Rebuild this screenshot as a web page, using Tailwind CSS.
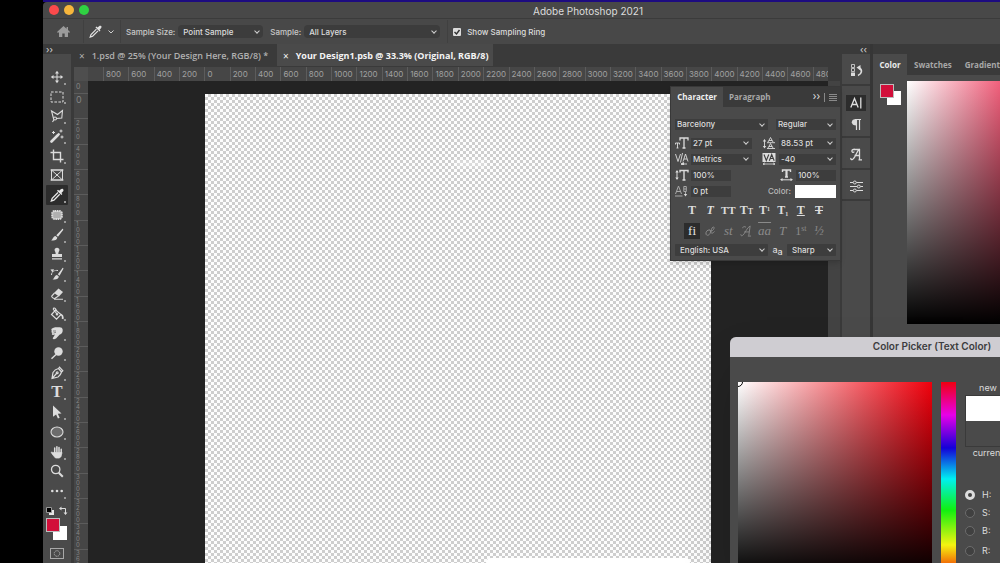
<!DOCTYPE html>
<html lang="en">
<head>
    <meta charset="UTF-8">
    <meta name="viewport" content="width=device-width, initial-scale=1.0">
    <title>Adobe Photoshop 2021</title>
    <script src="https://cdn.jsdelivr.net/npm/@tailwindcss/browser@4"></script>
    <style>
        body {
            font-family: Inter, 'Liberation Sans', sans-serif;
        }
        .clean {
            font-family: 'Open Sans', 'Noto Sans', sans-serif;
        }
        .serif {
            font-family: 'Liberation Serif', serif;
        }
        .checker {
            background: repeating-conic-gradient(#cecece 0 25%, #fdfdfd 0 50%) 0 0 / 6px 6px;
        }
        .ramp {
            background: linear-gradient(to bottom, transparent, #000), linear-gradient(to right, #fff, #f2607c);
        }
        .field {
            background: linear-gradient(to bottom, transparent, #000), linear-gradient(to right, #fff, #f0000c);
        }
        .hue {
            background: linear-gradient(to bottom, #f00010, #e800e8 17%, #1400d8 34%, #00f0f0 50%, #10f010 66%, #f4f410 84%, #f01000);
        }
        /* dropdown chevron */
        .drop::after {
            content: '';
            position: absolute;
            right: 4px;
            top: 50%;
            width: 4px;
            height: 4px;
            margin-top: -3px;
            border-right: 1px solid #d0d0d0;
            border-bottom: 1px solid #d0d0d0;
            transform: rotate(45deg);
            pointer-events: none;
        }
        /* flyout marker on grouped tools */
        .more::after {
            content: '';
            position: absolute;
            right: 2px;
            bottom: 2px;
            width: 2px;
            height: 2px;
            background: #999;
        }
    </style>
</head>
<body class="bg-black h-screen overflow-hidden flex flex-col pl-[43px] text-[#dcdcdc] text-[9px] leading-3 relative">
    <div class="h-[2px] bg-[#1d0b80] shrink-0"></div>

    <!-- Title bar -->
    <header class="h-[17px] shrink-0 flex items-center bg-[#484848] border-b border-[#3b3b3b] rounded-tl-sm">
        <div class="flex gap-[5px] pl-[6px]">
            <button aria-label="Close" class="size-[10px] rounded-full bg-[#fb4a4c]"></button>
            <button aria-label="Minimize" class="size-[10px] rounded-full bg-[#f7b63c]"></button>
            <button aria-label="Zoom" class="size-[10px] rounded-full bg-[#2fd142]"></button>
        </div>
        <h1 class="flex-1 text-center pl-[87px] pt-px text-[10px]">Adobe Photoshop 2021</h1>
    </header>

    <!-- Options bar -->
    <div class="h-[25px] shrink-0 flex items-center bg-[#484848] text-[8px] font-medium whitespace-nowrap">
        <button aria-label="Home" class="ml-[14px]">
            <svg class="size-[13px]" viewBox="0 0 13 13" fill="#9b9b9b"><path d="M6.500 1 0 7l1 1 1-.9V12h3.300V8.400h2.400V12H11V7.100l1 .9 1-1-2-1.900V2H9.600v1.700z"/></svg>
        </button>
        <span class="w-px h-[23px] bg-[#404040] ml-[13px]"></span>
        <button aria-label="Eyedropper presets" class="ml-[5px] flex items-center gap-[6px]">
            <svg class="size-[13px]" viewBox="0 0 14 14"><path d="M8 4.500 2.200 10.300 1.300 13l2.600-.9L9.700 6.300" fill="none" stroke="#e2e2e2" stroke-width="1.300"/><path d="m7 2.700 4.400 4.400 1-1-1-1.100 1.500-1.500c.8-.8.8-1.700.2-2.300s-1.600-.6-2.300.1L9.200 2.800 8 1.700z" fill="#e2e2e2"/></svg>
            <svg class="w-[6px] h-[4px]" viewBox="0 0 6 4" fill="none" stroke="#d0d0d0"><path d="m.5.5 2.500 2.500L5.500.5"/></svg>
        </button>
        <span class="w-px h-[23px] bg-[#404040] ml-[6px]"></span>
        <label for="size" class="ml-[5px] text-[#c8c8c8]">Sample Size:</label>
        <div class="drop relative ml-[3px]">
            <select id="size" class="appearance-none block w-[85px] h-[13px] pl-[5px] bg-[#3c3c3c] rounded-sm"><option>Point Sample</option></select>
        </div>
        <label for="sample" class="ml-[7px] text-[#c8c8c8]">Sample:</label>
        <div class="drop relative ml-[3px]">
            <select id="sample" class="appearance-none block w-[136px] h-[13px] pl-[5px] bg-[#3c3c3c] rounded-sm"><option>All Layers</option></select>
        </div>
        <span class="w-px h-[23px] bg-[#404040] ml-[7px]"></span>
        <label class="flex items-center gap-[6px] ml-[5px]">
            <span class="relative size-[8px]">
                <input type="checkbox" checked class="appearance-none block size-[8px] rounded-[1px] bg-[#dcdcdc]">
                <svg class="absolute inset-0 size-[8px] pointer-events-none" viewBox="0 0 8 8" fill="none" stroke="#303030" stroke-width="1.400"><path d="m1.500 4 2 2 3-4"/></svg>
            </span>
            Show Sampling Ring
        </label>
    </div>

    <main class="flex-1 min-h-0 flex bg-[#3a3a3a]">
        <!-- Toolbar -->
        <aside class="w-[29px] shrink-0 flex flex-col border-r border-[#3a3a3a]">
            <button class="h-[10px] pl-[3px] text-left leading-[7px] text-[9px]" aria-label="Expand tools">››</button>
            <div class="flex-1 bg-[#4a4a4a] pt-[13px]">
                <div class="grid grid-rows-[repeat(22,minmax(0,1fr))] h-[434px] px-[3px] [&>button]:relative [&>button]:flex [&>button]:items-center [&>button]:justify-center [&_svg]:size-[14px]">
                    <button class="more" aria-label="Move"><svg viewBox="0 0 14 14" fill="#dcdcdc"><path d="M6.500 3h1v3.500H11v1H7.500V11h-1V7.500H3v-1h3.500z"/><path d="m7 .8 2 2.700H5zM7 13.200l2-2.700H5zM.8 7l2.700-2v4zM13.200 7l-2.700-2v4z"/></svg></button>
                    <button class="more" aria-label="Marquee"><svg viewBox="0 0 14 14" fill="none" stroke="#dcdcdc"><rect x="1" y="2" width="12" height="10" stroke-dasharray="2.600 1.400"/></svg></button>
                    <button class="more" aria-label="Polygonal lasso"><svg viewBox="0 0 14 14" fill="none" stroke="#dcdcdc" stroke-width="1.100"><path d="M3.500 9.500 1.500 2l6 3.500L12.500 1.500l-.7 7.500-5.300.5"/><circle cx="5" cy="9.500" r="1.500"/><path d="M4 10.500 2.500 13"/></svg></button>
                    <button class="more" aria-label="Magic wand"><svg viewBox="0 0 14 14" stroke="#dcdcdc" fill="none"><path d="M1.500 12.500 8 6" stroke-width="2.600" stroke-linecap="round"/><path d="m8.500 5.500 1-1" stroke-width="2"/><path d="M3.500 2v3M2 3.500h3M11 .5v3M9.500 2h3M12 6.500v3M10.500 8h3"/></svg></button>
                    <button class="more" aria-label="Crop"><svg viewBox="0 0 14 14" fill="none" stroke="#dcdcdc" stroke-width="1.400"><path d="M3.500.5v10h10M.5 3.500h10v10"/></svg></button>
                    <button aria-label="Frame"><svg viewBox="0 0 14 14" fill="none" stroke="#dcdcdc"><rect x="1.500" y="2" width="11" height="10"/><path d="m1.500 2 11 10M12.500 2l-11 10M.5 2h13M.5 12h13"/></svg></button>
                    <button class="more bg-[#2c2c2c] rounded-[1px]" aria-label="Eyedropper"><svg viewBox="0 0 14 14"><path d="M8 4.500 2.200 10.300 1.300 13l2.600-.9L9.700 6.300" fill="none" stroke="#e8e8e8" stroke-width="1.300"/><path d="m7 2.700 4.400 4.400 1-1-1-1.100 1.500-1.500c.8-.8.8-1.700.2-2.300s-1.600-.6-2.300.1L9.200 2.800 8 1.700z" fill="#e8e8e8"/></svg></button>
                    <button class="more" aria-label="Patch"><svg viewBox="0 0 14 14"><rect x="2.200" y="3" width="9.600" height="8" rx="2.500" fill="#b0b0b0" stroke="#dcdcdc" stroke-width="2" stroke-dasharray="1.600 .6"/></svg></button>
                    <button class="more" aria-label="Brush"><svg viewBox="0 0 14 14" fill="#dcdcdc"><path d="M13 1c.5.500.2 1-.2 1.600L8 8.800 6.300 7.300 11.600 1.700C12 1.200 12.500.6 13 1zM5.500 8l1.800 1.600C7.200 12 4.500 13 1 12.300c2-.6 1.800-3.800 4.500-4.300z"/></svg></button>
                    <button class="more" aria-label="Clone stamp"><svg viewBox="0 0 14 14" fill="#dcdcdc"><path d="M7 .8c1.700 0 2.600 1.200 2.400 2.500C9.200 4.400 8.300 5 8.300 7H12v3H2V7h3.700c0-2-.9-2.600-1.100-3.700C4.400 2 5.300.8 7 .8zM2 11.200h10v1.300H2z"/></svg></button>
                    <button class="more" aria-label="History brush"><svg viewBox="0 0 14 14" fill="#dcdcdc"><path d="M13.200 1c.5.500.1 1.100-.2 1.600L9.500 8.800 7.800 7.300 12 1.700c.3-.5.800-1.100 1.200-.7zM7 8l1.800 1.600C8.700 12 6 13 2.500 12.300 4.500 11.700 4.300 8.500 7 8z"/><path d="M1.500 8c0-3.500 3-5 6.500-4.500" fill="none" stroke="#dcdcdc" stroke-dasharray="2.500 .8"/><path d="M.5 2.500 4 2.200 2.500 5.500z"/></svg></button>
                    <button class="more" aria-label="Eraser"><svg viewBox="0 0 14 14"><path d="m8.500 1.500 4.500 3.500-4 4.500-5-3.500z" fill="#dcdcdc"/><path d="m4.500 6-2.800 3c-.5.800 1.800 2.800 3 2.500L8.500 9M4 12.200h9" fill="none" stroke="#dcdcdc" stroke-width="1.100"/></svg></button>
                    <button class="more" aria-label="Paint bucket"><svg viewBox="0 0 14 14" fill="none" stroke="#dcdcdc" stroke-width="1.200"><path d="m5.500 3 5.500 4.500-4.500 4.700-5-4.700zM7 7 3.500 2.500c-.5-1.300 1-2 1.800-1L7.500 5"/><circle cx="7" cy="7.200" r=".7"/><path d="M11 7.500c1.500.6 2 2.500 1.600 4.500" stroke-width="1.800"/></svg></button>
                    <button class="more" aria-label="Smudge"><svg viewBox="0 0 14 14" fill="#dcdcdc"><path d="M2 2.500C4 1 6.500 1.500 8 1.300c2.500-.5 4.500 0 4.700 2.500.2 2.500-1 4.500-3.200 5L6.500 12c-1 1.500-3.500 1.500-3.800.2L5 8.500 3 9C1.500 9 1.500 7.500 2.500 7 1 6.500 1.200 5.200 2 5c-.9-.5-.9-1.800 0-2.500z"/><path d="M3 5h3M3.500 7 6 6.300" stroke="#4a4a4a" stroke-width=".6"/></svg></button>
                    <button class="more" aria-label="Dodge"><svg viewBox="0 0 14 14"><circle cx="8.500" cy="5.500" r="4.200" fill="#dcdcdc"/><path d="m6 8.500-4.500 4.300" stroke="#dcdcdc" stroke-width="1.500"/></svg></button>
                    <button class="more" aria-label="Pen"><svg viewBox="0 0 14 14" fill="none" stroke="#dcdcdc" stroke-width="1.200"><path d="M2 12.500 3 6.500C4.500 4 6.500 3 8.500 2.500l3 3.500c-.5 2-1.500 3.800-3.500 5zM2 12.500 6.500 7.500M8.500 2.500l1-1.300 3.300 3.600-1.300 1.200"/><circle cx="7.200" cy="6.800" r=".9"/></svg></button>
                    <button class="more serif text-[17px] leading-4 font-bold" aria-label="Type">T</button>
                    <button class="more" aria-label="Path selection"><svg viewBox="0 0 14 14" fill="#dcdcdc"><path d="M3 .5 11.500 8.500 7.800 8.800 9.700 12.800 7.900 13.500 6.100 9.500 3 11.800z"/></svg></button>
                    <button class="more" aria-label="Ellipse"><svg viewBox="0 0 14 14"><ellipse cx="7" cy="7" rx="6" ry="5" fill="#6c6c6c" stroke="#dcdcdc" stroke-width="1.100"/></svg></button>
                    <button class="more" aria-label="Hand"><svg viewBox="0 0 14 14" fill="none" stroke="#dcdcdc" stroke-linecap="round"><path d="M4.700 8V3M6.900 7V1.800M9 7V2.500M11.200 8V4.300" stroke-width="1.500"/><path d="M4 7.500h8L11 11.500 9.500 13h-4L2.500 9.500 1.300 7.500z" fill="#dcdcdc" stroke-width=".8"/></svg></button>
                    <button aria-label="Zoom tool"><svg viewBox="0 0 14 14" fill="none" stroke="#dcdcdc"><circle cx="5.700" cy="5.500" r="4.200" stroke-width="1.300"/><path d="m8.800 8.800 4 4" stroke-width="2"/></svg></button>
                    <button class="more" aria-label="Edit toolbar"><svg viewBox="0 0 14 14" fill="#dcdcdc"><circle cx="2.300" cy="7" r="1.300"/><circle cx="7" cy="7" r="1.300"/><circle cx="11.700" cy="7" r="1.300"/></svg></button>
                </div>
                <div class="flex gap-[5px] pl-[3px] pt-[5px]">
                    <button aria-label="Default colors"><svg class="size-[8px]" viewBox="0 0 8 8"><path d="M3 3h5v5H3z" fill="#e6e6e6"/><path d="M.5.5h5v5h-5z" fill="#000" stroke="#999"/></svg></button>
                    <button aria-label="Switch colors"><svg class="size-[9px]" viewBox="0 0 9 9" fill="none" stroke="#dcdcdc"><path d="M2 2.500h4.500V7"/><path d="M0 2.500 2.500.5v4zM6.500 9l-2-2.500h4z" fill="#dcdcdc" stroke="none"/></svg></button>
                </div>
                <div class="relative w-[21px] h-[22px] ml-[3px] mt-[3px]">
                    <button aria-label="Background color" class="absolute right-0 bottom-0 size-[14px] bg-white"></button>
                    <button aria-label="Foreground color" class="absolute left-0 top-0 size-[14px] bg-[#d20f3a] border border-[#bdbdbd]"></button>
                </div>
                <button aria-label="Quick mask" class="block ml-[7px] mt-[8px]"><svg class="w-[14px] h-[11px]" viewBox="0 0 14 11" fill="none" stroke="#a8a8a8"><rect x=".5" y=".5" width="13" height="10"/><circle cx="7" cy="5.500" r="2.800" stroke-dasharray="1.500 .7"/></svg></button>
            </div>
        </aside>

        <!-- Document area -->
        <section class="flex-1 min-w-0 flex flex-col pl-[2px] pr-[2px]">
            <nav class="clean h-[22px] shrink-0 flex text-[9px] font-semibold whitespace-nowrap text-[#b0b0b0]">
                <button class="flex items-center gap-[7px] pt-px pl-[5px] w-[203px]"><span class="font-normal text-[10px]">×</span>1.psd @ 25% (Your Design Here, RGB/8) *</button>
                <button class="flex items-center gap-[7px] pt-px pl-[6px] w-[216px] bg-[#4a4a4a] text-[#f4f4f4] font-bold"><span class="font-normal text-[10px]">×</span>Your Design1.psb @ 33.3% (Original, RGB/8)</button>
            </nav>
            <div class="h-[15px] shrink-0 flex bg-[#464646] border-t border-[#3a3a3a] mr-[12px]">
                <span class="w-[14px] shrink-0 bg-[#4e4e4e]"></span>
                <div class="flex-1 min-w-0 ml-[15px] overflow-hidden">
                    <div id="ruler-x" class="w-[735px] grid grid-cols-[repeat(29,minmax(0,1fr))] text-[8px] leading-[15px] text-[#a0a0a0]"></div>
                </div>
            </div>
            <div class="flex-1 min-h-0 flex">
                <div class="w-[14px] shrink-0 bg-[#464646] overflow-hidden text-[#848484]">
                    <div class="h-[12px] pl-[2px] text-[7px] leading-[11px]">0</div>
                    <div id="ruler-y" class="grid grid-rows-[repeat(19,minmax(0,1fr))] h-[481px] text-[6px] leading-[7px]"></div>
                </div>
                <div class="flex-1 min-w-0 bg-[#232323] flex justify-start pl-[117px] pt-[13px] overflow-hidden">
                    <div class="checker w-[506px] h-full relative">
                        <div class="absolute left-[250px] top-[66px] w-[32px] h-[7px] bg-white/30 blur-[2px]"></div>
                        <div class="absolute left-[281px] bottom-0 w-[204px] h-[5px] bg-white rounded-t-md"></div>
                    </div>
                </div>
                <div class="w-[12px] shrink-0 bg-[#434343]"></div>
            </div>
        </section>

        <!-- Collapsed panels -->
        <aside class="w-[31px] shrink-0 flex flex-col border-r-3 border-[#363636]">
            <button class="h-[10px] text-right pr-[3px] leading-[7px] text-[9px]" aria-label="Collapse panels">‹‹</button>
            <div class="flex-1 flex flex-col gap-[2px] [&>div]:bg-[#4a4a4a] [&>div]:flex [&>div]:flex-col [&>div]:items-center [&>div]:justify-center [&>div]:pt-[3px]">
                <div class="h-[30px]">
                    <button aria-label="History"><svg class="size-[13px]" viewBox="0 0 13 13" fill="none" stroke="#dcdcdc"><path d="M1.500.5h3v3h-3zM1.500 4.500h3v3h-3z" stroke-width=".8"/><path d="M1 8.500h4V12H1z" fill="#dcdcdc" stroke="none"/><path d="M8 11.500c4-1.500 4.500-5.500 1.500-7.500" stroke-width="1.600"/><path d="M6.500 3.500 10.500 1v5.500z" fill="#dcdcdc" stroke="none"/></svg></button>
                </div>
                <div class="h-[50px] gap-[7px]">
                    <button aria-label="Character" class="bg-[#2c2c2c] w-[20px] h-[16px] flex justify-center"><svg class="w-[12px] h-[16px]" viewBox="0 0 12 16" fill="none" stroke="#e0e0e0" stroke-width="1.300"><path d="M.8 12.500 4.500 3.500l3.700 9M2.300 9.500h4.400M10.800 2.500v11"/></svg></button>
                    <button aria-label="Paragraph"><svg class="w-[10px] h-[13px]" viewBox="0 0 10 13"><path d="M5.500 1v11M8.500 1v11M4 1.500h6" stroke="#dcdcdc" stroke-width="1.200"/><path d="M5.500 1v6.500C2.500 7.500.8 6.200.8 4.200S2.500 1 5.500 1z" fill="#dcdcdc"/></svg></button>
                </div>
                <div class="h-[30px]">
                    <button aria-label="Glyphs"><svg class="w-[13px] h-[13px]" viewBox="0 0 13 13" fill="none" stroke="#dcdcdc"><path d="M9.500 1v10.500M9.500 1C6.500 3 5.500 10 2.500 11.500c-1.200.5-2-.5-1.500-1.500M4.500 7.500h5M5.500 1.500C3.500.8 1.500 2 2 3.500s2 1 2 0M4 1.500h6M8.500 11.800H12" stroke-width="1.300"/></svg></button>
                </div>
                <div class="h-[29px]">
                    <button aria-label="Properties"><svg class="w-[13px] h-[13px]" viewBox="0 0 13 13" fill="none" stroke="#dcdcdc"><path d="M0 2.500h3M6.500 2.500H13M0 6.500h7M10.500 6.500H13M0 10.500h3M6.500 10.500H13"/><circle cx="4.800" cy="2.500" r="1.500"/><circle cx="8.800" cy="6.500" r="1.500"/><circle cx="4.800" cy="10.500" r="1.500"/></svg></button>
                </div>
                <div class="flex-1"></div>
            </div>
        </aside>

        <!-- Color panel -->
        <aside class="w-[127px] shrink-0 flex flex-col pt-[10px] overflow-hidden">
            <nav class="clean h-[21px] shrink-0 flex font-bold text-[8px] text-[#a8a8a8] whitespace-nowrap">
                <button class="w-[34px] shrink-0 bg-[#4a4a4a] text-[#ececec]">Color</button>
                <button class="px-[7px]">Swatches</button>
                <button class="pl-[6px]">Gradients</button>
            </nav>
            <div class="flex-1 bg-[#4a4a4a] flex items-start pt-[6px]">
                <div class="relative w-[21px] h-[21px] ml-[7px] mr-[6px] mt-[3px] shrink-0">
                    <button aria-label="Panel background" class="absolute right-0 bottom-0 size-[14px] bg-white"></button>
                    <button aria-label="Panel foreground" class="absolute left-0 top-0 size-[14px] bg-[#d20f3a] border border-[#bdbdbd]"></button>
                </div>
                <div class="ramp flex-1 h-[243px]"></div>
            </div>
        </aside>
    </main>

    <!-- Character panel -->
    <section class="absolute left-[670px] top-[86px] w-[171px] bg-[#4a4a4a] border border-[#383838] shadow-md text-[8px] leading-[11px] font-medium">
        <nav class="clean h-[20px] flex items-stretch bg-[#3a3a3a] font-bold">
            <button class="w-[52px] pb-[2px] bg-[#4a4a4a] text-[#f0f0f0]">Character</button>
            <button class="pl-[6px] pb-[2px] text-[#a8a8a8]">Paragraph</button>
            <button aria-label="Collapse" class="ml-auto text-[12px] font-normal pb-[4px]">››</button>
            <span class="w-px h-[9px] bg-[#888] self-center mx-[4px]"></span>
            <button aria-label="Panel menu" class="mr-[3px]"><svg class="w-[8px] h-[7px]" viewBox="0 0 8 7" stroke="#8a8a8a"><path d="M0 .5h8M0 2.500h8M0 4.500h8M0 6.500h8"/></svg></button>
        </nav>
        <form class="px-[4px] pt-[12px] pb-[4px] [&_select]:appearance-none [&_select]:block [&_select]:w-full [&_select]:h-[11px] [&_select]:bg-[#3d3d3d] [&_input]:bg-[#3d3d3d] [&_input]:h-[11px] [&_input]:pl-[2px]">
            <div class="flex justify-between">
                <div class="drop relative w-[93px]"><select aria-label="Font family" class="pl-[2px]"><option>Barcelony</option></select></div>
                <div class="drop relative w-[60px]"><select aria-label="Font style" class="pl-[2px]"><option>Regular</option></select></div>
            </div>
            <div class="grid grid-cols-[16px_61px_10px_17px_57px] auto-rows-[12px] gap-y-1 mt-[7px] items-center">
                <svg class="w-[14px] h-[12px]" viewBox="0 0 14 12" fill="none" stroke="#dcdcdc"><path d="M5 3.500V1h8v2.500M9 1v10M7.500 11h3" stroke-width="1.300"/><path d="M.5 7.500V6h4v1.500M2.500 6v5M1.500 11h2" stroke-width=".9"/></svg>
                <div class="drop relative"><select aria-label="Font size" class="pl-[2px]"><option>27 pt</option></select></div>
                <span></span>
                <svg class="w-[14px] h-[12px]" viewBox="0 0 14 12" fill="none" stroke="#dcdcdc" stroke-width=".9"><path d="m6 5 2.500-4.500L11 5M7 3.500h3M6 11l2.500-4.500L11 11M7 9.500h3M5 5.700h8M5 11.500h8M2.500 3v7"/><path d="M.8 4.500 2.500 2l1.700 2.500zM.8 9l1.700 2.500L4.200 9z" fill="#dcdcdc" stroke="none"/></svg>
                <div class="drop relative"><select aria-label="Leading" class="pl-[2px]"><option>88.53 pt</option></select></div>

                <svg class="w-[14px] h-[12px]" viewBox="0 0 14 12" fill="none" stroke="#dcdcdc" stroke-width=".9"><path d="m.5 1 2.500 7.500L5.500 1M7.500 0 5.500 9.500M8 8.500 10.500 1 13 8.500M9 6h3M6.500 11H12"/><path d="m6 11 2.500-1.500v3z" fill="#dcdcdc"/></svg>
                <div class="drop relative"><select aria-label="Kerning" class="pl-[2px]"><option>Metrics</option></select></div>
                <span></span>
                <svg class="w-[14px] h-[12px]" viewBox="0 0 14 12" fill="none"><path d="M.5 0h13v9H.5z" fill="#dcdcdc"/><path d="m2 1.500 2.300 6 2.500-6M7.300 7.800 9.700 1.500l2.500 6.300M8.300 5.500h3" stroke="#3d3d3d" stroke-width="1.100"/><path d="M1 11h12M3 9.800 1 11l2 1.200M11 9.800l2 1.200-2 1.200" stroke="#dcdcdc" stroke-width=".8"/></svg>
                <div class="drop relative"><select aria-label="Tracking" class="pl-[2px]"><option>-40</option></select></div>

                <svg class="w-[14px] h-[12px]" viewBox="0 0 14 12" fill="none" stroke="#dcdcdc"><path d="M5 3.500V1.500h8v2M9 1.500V11M7.500 11h3" stroke-width="1.400"/><path d="M2 2v8"/><path d="M.3 3.500 2 1l1.700 2.500zM.3 8.500 2 11l1.700-2.500z" fill="#dcdcdc" stroke="none"/></svg>
                <input aria-label="Vertical scale" value="100%" class="w-[40px]">
                <div class="col-span-3 flex items-center justify-end gap-[3px]">
                    <svg class="w-[13px] h-[12px]" viewBox="0 0 13 12" fill="none" stroke="#dcdcdc"><path d="M2.500 3V1h8v2M5 8h3" stroke-width="1.400"/><path d="M6.500 1v7" stroke-width="2.200"/><path d="M1 10.800h11"/><path d="M2.500 9 0 10.800l2.500 1.200zM10.500 9l2.500 1.800-2.500 1.200z" fill="#dcdcdc" stroke="none"/></svg>
                    <input aria-label="Horizontal scale" value="100%" class="w-[40px]">
                </div>

                <svg class="w-[14px] h-[12px]" viewBox="0 0 14 12" fill="none" stroke="#a8a8a8"><path d="M.5 9 3.500 1l3 8M1.500 6.500h4M0 11h7.500"/><path d="M8.800 1.500h2.500v5H8.800zM8.800 4h2.500M10.500 7v3"/><path d="m8.800 9 1.700 2.500L12.200 9z" fill="#dcdcdc" stroke="none"/></svg>
                <input aria-label="Baseline shift" value="0 pt" class="w-[40px]">
                <div class="col-span-3 flex items-center justify-end gap-[4px]">
                    <span class="text-[#b8b8b8]">Color:</span>
                    <button type="button" aria-label="Text color" class="w-[41px] h-[13px] bg-white"></button>
                </div>
            </div>
            <div class="serif grid grid-cols-8 mt-[5px] px-[8px] text-[12px] leading-[16px] font-bold [&>button]:h-[16px] [&>button]:whitespace-nowrap">
                <button type="button" aria-label="Faux bold" class="font-black">T</button>
                <button type="button" aria-label="Faux italic" class="italic">T</button>
                <button type="button" aria-label="All caps" class="text-[11px]">TT</button>
                <button type="button" aria-label="Small caps">T<span class="text-[8px]">T</span></button>
                <button type="button" aria-label="Superscript">T<sup class="text-[6px]">1</sup></button>
                <button type="button" aria-label="Subscript">T<sub class="text-[6px]">1</sub></button>
                <button type="button" aria-label="Underline" class="underline">T</button>
                <button type="button" aria-label="Strikethrough" class="line-through">T</button>
            </div>
            <div class="serif grid grid-cols-8 mt-[5px] px-[8px] text-[13px] leading-[16px] font-normal text-[#8a8a8a] [&>button]:h-[16px] [&>button]:whitespace-nowrap">
                <button type="button" aria-label="Ligatures" class="bg-[#2c2c2c] text-[#e6e6e6] w-[16px] justify-self-center">fi</button>
                <button type="button" aria-label="Contextual alternates" class="flex justify-center items-center"><svg class="size-[12px]" viewBox="0 0 12 12" fill="none" stroke="#8a8a8a"><path d="M5.500 5C3.500 4.500 1.500 7 2 9s3 1.500 4-.5.500-3.500-.5-3.500c1 1.500 3 1 4-.5s.5-3-.5-2.500-2.500 4-2 5.500 2 .5 3.500-1"/></svg></button>
                <button type="button" aria-label="Discretionary ligatures" class="italic">st</button>
                <button type="button" aria-label="Swash" class="flex justify-center items-center"><svg class="size-[12px]" viewBox="0 0 13 13" fill="none" stroke="#8a8a8a"><path d="m11 1-1.500 10.500M11 1C7 3 5.500 10 2.500 11.500c-1.200.5-2-.5-1.500-1.500M4.500 7.500H10M6.500 2.500C5 1 2.500 2 3 3.500M8.500 12H12"/></svg></button>
                <button type="button" aria-label="Stylistic alternates" class="italic overline">aa</button>
                <button type="button" aria-label="Titling alternates" class="italic">T</button>
                <button type="button" aria-label="Ordinals" class="text-[12px]">1<sup class="text-[8px]">st</sup></button>
                <button type="button" aria-label="Fractions" class="italic">½</button>
            </div>
            <div class="flex items-center mt-[5px] [&_select]:h-[12px] [&_select]:rounded-[1px]">
                <div class="drop relative w-[93px]"><select aria-label="Language" class="pl-[5px]"><option>English: USA</option></select></div>
                <span class="w-[19px] text-center text-[9px] leading-[12px]">a<sub class="text-[9px]">a</sub></span>
                <div class="drop relative flex-1"><select aria-label="Anti-aliasing" class="pl-[5px]"><option>Sharp</option></select></div>
            </div>
        </form>
    </section>

    <!-- Color picker dialog -->
    <section role="dialog" aria-labelledby="picker-title" class="absolute left-[730px] right-0 top-[337px] bg-[#4a4a4a] rounded-tl-md shadow-2xl overflow-hidden">
        <h2 id="picker-title" class="h-[20px] pl-[134px] leading-[19px] bg-[#cfcdd2] text-[#3c3c3e] text-[10px] font-semibold text-center whitespace-nowrap">Color Picker (Text Color)</h2>
        <div class="flex pt-[25px] pl-[8px] items-start">
            <div class="field w-[194px] h-[194px] shrink-0 relative overflow-hidden">
                <span class="absolute -left-[5px] -top-[5px] size-[10px] rounded-full border border-black"></span>
            </div>
            <div class="hue w-[15px] h-[194px] shrink-0 ml-[9px]"></div>
            <div class="ml-[9px] shrink-0 text-[9px]">
                <div class="w-[46px] flex flex-col items-center">
                    <span class="h-[13px]">new</span>
                    <div class="w-[46px] h-[52px] border border-[#3a3a3a]"><div class="h-[25px] bg-white"></div></div>
                    <span>current</span>
                </div>
                <fieldset class="mt-[30px] flex flex-col gap-[6px] [&_label]:flex [&_label]:items-center [&_label]:gap-[7px] [&_input]:appearance-none [&_input]:size-[10px] [&_input]:rounded-full [&_input]:border [&_input]:border-[#6c6c6c] [&_input]:bg-[#404040] [&_input]:checked:border-3 [&_input]:checked:border-[#dcdcdc]">
                    <label><input type="radio" name="channel" checked>H:</label>
                    <label><input type="radio" name="channel">S:</label>
                    <label><input type="radio" name="channel">B:</label>
                    <label class="mt-[2px]"><input type="radio" name="channel">R:</label>
                </fieldset>
            </div>
        </div>
    </section>

    <script>
        const rulerX = document.getElementById('ruler-x');
        const rulerY = document.getElementById('ruler-y');

        // Horizontal marks: 800 left of the origin up to 4800
        for (let v = -800; v <= 4800; v += 200) {
            const mark = document.createElement('span');
            mark.className = 'border-l border-[#5c5c5c] pl-[2px]';
            mark.textContent = Math.abs(v);
            rulerX.appendChild(mark);
        }

        // Vertical marks, one digit per line
        for (let v = 0; v < 3800; v += 200) {
            const mark = document.createElement('div');
            mark.className = 'border-t border-[#5c5c5c] pl-[2px] w-[14px] overflow-hidden';
            mark.innerHTML = v === 0 ? '<span class="text-[9px] leading-[11px]">0</span>' : String(v).split('').join('<br>');
            if (v >= 1000) mark.classList.add('leading-[6px]');
            rulerY.appendChild(mark);
        }
    </script>
</body>
</html>
